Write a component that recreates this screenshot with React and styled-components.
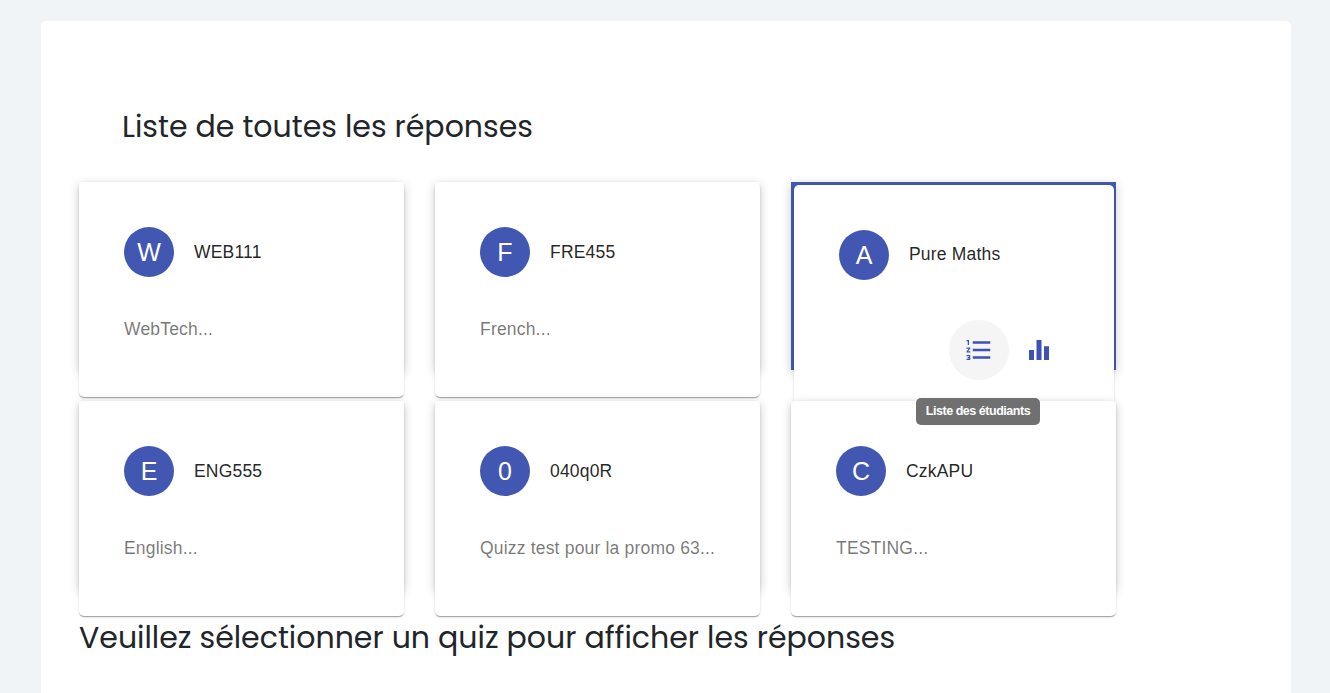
import React from 'react';
import styled, { createGlobalStyle } from 'styled-components';

const GlobalStyle = createGlobalStyle`
  *, *::before, *::after { box-sizing: border-box; }
  html, body { height: 100%; }
  body {
    margin: 0;
    overflow: hidden;
    background: #f0f4f7;
    color: #212529;
    font-family: "Liberation Sans", Arial, sans-serif;
  }
`;

const Page = styled.main`
  height: 693px;
  padding: 21px 39px 0 41px;
  overflow: hidden;
`;

const Panel = styled.section`
  height: 700px;
  padding: 83px 38px 0;
  background: #fff;
  border-radius: 5px;
`;

const Heading = styled.h2`
  margin: 0;
  padding-left: ${(p) => p.$indent || 0}px;
  font-family: Poppins, Inter, sans-serif;
  font-size: 30px;
  font-weight: 400;
  line-height: 46px;
  white-space: nowrap;
`;

const Grid = styled.div`
  display: grid;
  grid-template-columns: repeat(3, 325px);
  grid-auto-rows: 188px;
  gap: 31px;
  margin: 32px 0 26px;
`;

const Tile = styled.article`
  position: relative;
  border: solid #4257b2;
  border-width: ${(p) => (p.$active ? '3px 2px 0 3px' : '0')};
  background: ${(p) => (p.$active ? '#4257b2' : 'transparent')};
  box-shadow: 0 3px 10px rgba(0, 0, 0, 0.2);
`;

const Card = styled.div`
  height: ${(p) => (p.$active ? 225 : 215)}px;
  padding: 45px;
  background: #fff;
  border-radius: 5px;
  box-shadow: 0 2px 1px -1px rgba(0, 0, 0, 0.2), 0 1px 1px rgba(0, 0, 0, 0.14),
    0 1px 3px rgba(0, 0, 0, 0.12);
`;

const CardHeader = styled.header`
  display: flex;
  align-items: center;
  gap: 20px;
`;

const Avatar = styled.span`
  display: flex;
  align-items: center;
  justify-content: center;
  width: 50px;
  height: 50px;
  border-radius: 50%;
  background: #4257b2;
  color: #fff;
  font-size: 25px;
  line-height: 1;
`;

const Title = styled.span`
  padding-bottom: ${(p) => (p.$active ? 2 : 0)}px;
  color: rgba(0, 0, 0, 0.87);
  font-size: 17.5px;
  line-height: 25px;
  letter-spacing: 0.187px;
`;

const Description = styled.p`
  margin: 40px 0 0;
  color: rgba(0, 0, 0, 0.54);
  font-size: 17.5px;
  line-height: 25px;
  letter-spacing: 0.187px;
  white-space: nowrap;
`;

const Actions = styled.div`
  display: flex;
  justify-content: flex-end;
  margin: 40px 0 0;
`;

const IconButton = styled.button`
  position: relative;
  display: flex;
  align-items: center;
  justify-content: center;
  width: 60px;
  height: 60px;
  padding: 0;
  border: 0;
  border-radius: 50%;
  background: ${(p) => (p.$hovered ? '#f5f5f5' : 'transparent')};
  color: #3f51b5;

  svg {
    width: 30px;
    height: 30px;
    fill: currentColor;
  }
`;

const Tooltip = styled.span`
  position: absolute;
  z-index: 2;
  top: 78px;
  left: -33px;
  width: 124px;
  height: 27px;
  border-radius: 5px;
  background: #707070;
  color: #fff;
  font-size: 12.5px;
  font-weight: 700;
  line-height: 26px;
  letter-spacing: -0.47px;
  text-align: center;
  white-space: nowrap;
`;

const NumberedListIcon = () => (
  <svg viewBox="0 0 24 24" aria-hidden="true">
    <path d="M2 17h2v.5H3v1h1v.5H2v1h3v-4H2v1zm1-9h1V4H2v1h1v3zm-1 3h1.8L2 13.1v.9h3v-1H3.2L5 10.9V10H2v1zm5-6v2h14V5H7zm0 14h14v-2H7v2zm0-6h14v-2H7v2z" />
  </svg>
);

const BarsIcon = () => (
  <svg viewBox="0 0 24 24" aria-hidden="true">
    <path d="M10 20h4V4h-4v16zm-6 0h4v-8H4v8zM16 9v11h4V9h-4z" />
  </svg>
);

const quizzes = [
  { letter: 'W', title: 'WEB111', text: 'WebTech...' },
  { letter: 'F', title: 'FRE455', text: 'French...' },
  { letter: 'A', title: 'Pure Maths', active: true },
  { letter: 'E', title: 'ENG555', text: 'English...' },
  { letter: '0', title: '040q0R', text: 'Quizz test pour la promo 63...' },
  { letter: 'C', title: 'CzkAPU', text: 'TESTING...' },
];

function QuizCard({ letter, title, text, active }) {
  return (
    <Tile $active={active}>
      <Card $active={active}>
        <CardHeader>
          <Avatar>{letter}</Avatar>
          <Title $active={active}>{title}</Title>
        </CardHeader>
        {active ? (
          <Actions>
            <IconButton $hovered>
              <NumberedListIcon />
              <Tooltip>Liste des étudiants</Tooltip>
            </IconButton>
            <IconButton>
              <BarsIcon />
            </IconButton>
          </Actions>
        ) : (
          <Description>{text}</Description>
        )}
      </Card>
    </Tile>
  );
}

export default function App() {
  return (
    <>
      <GlobalStyle />
      <Page>
        <Panel>
          <Heading $indent={43}>Liste de toutes les réponses</Heading>
          <Grid>
            {quizzes.map((quiz) => (
              <QuizCard key={quiz.title} {...quiz} />
            ))}
          </Grid>
          <Heading>Veuillez sélectionner un quiz pour afficher les réponses</Heading>
        </Panel>
      </Page>
    </>
  );
}
